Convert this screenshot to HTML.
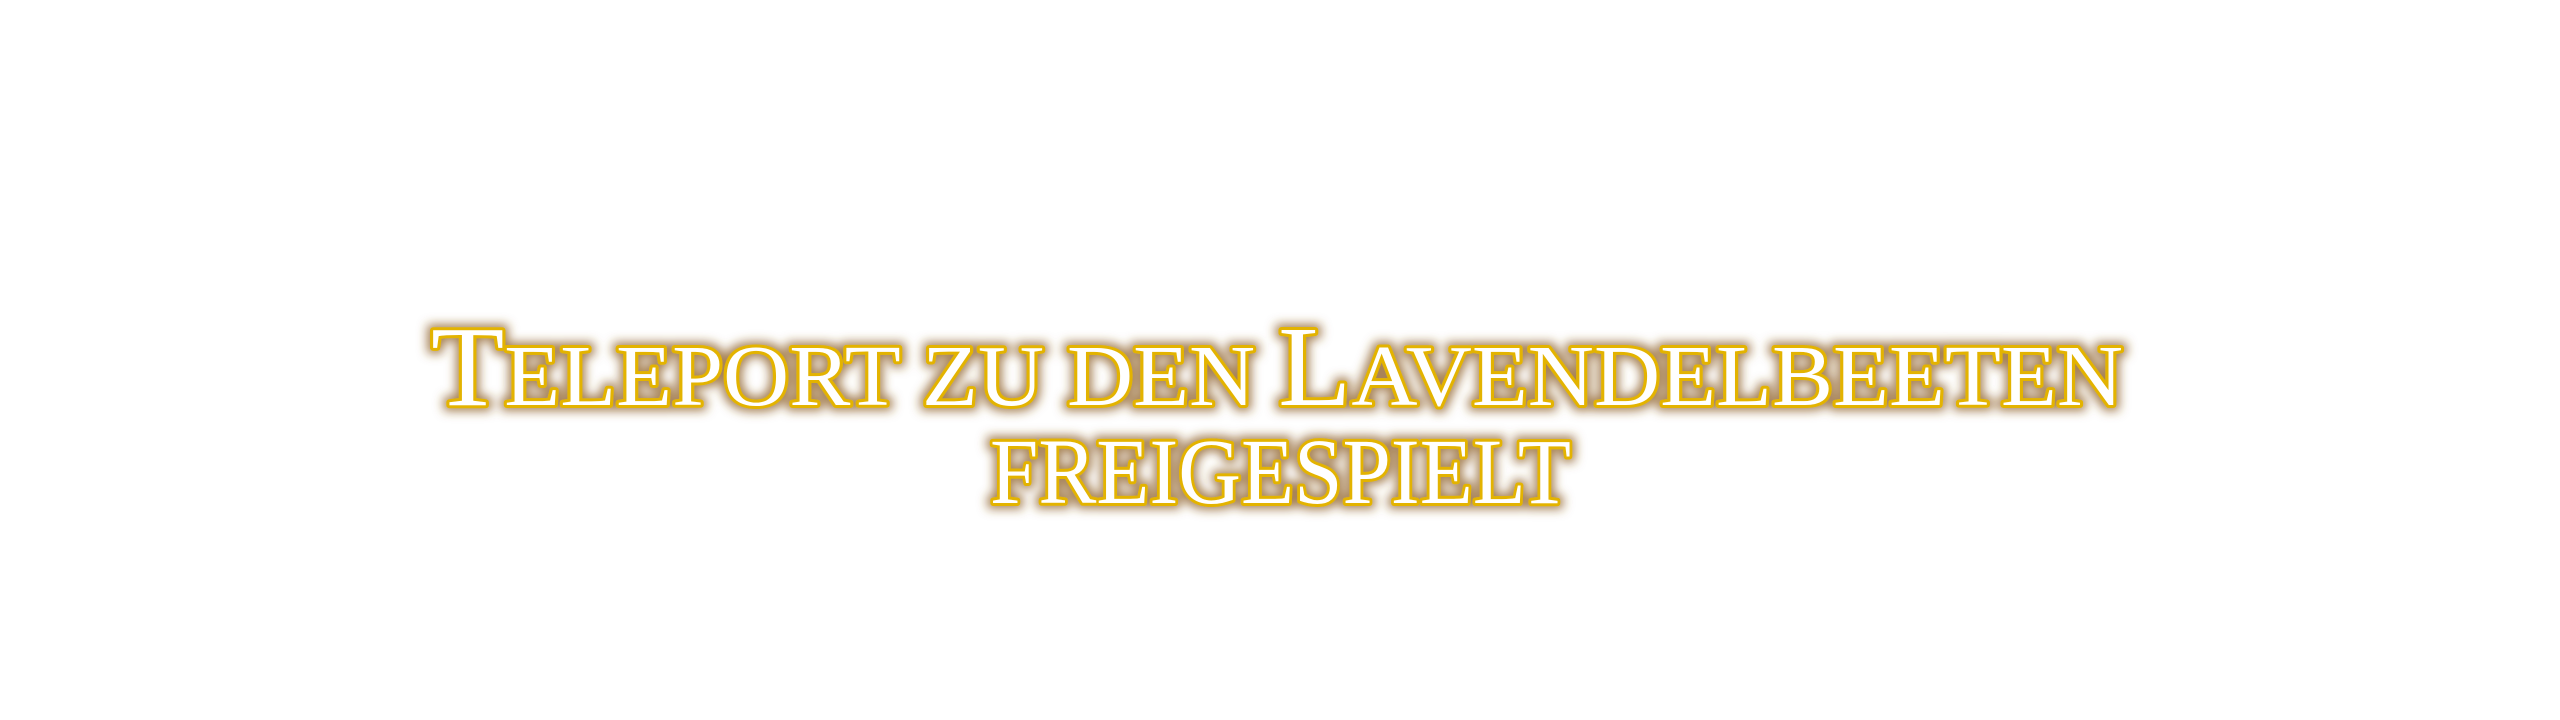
<!DOCTYPE html>
<html><head><meta charset="utf-8"><style>
html,body{margin:0;padding:0;background:#fff;width:2560px;height:720px;overflow:hidden}
svg{display:block}
text{font-family:"Liberation Serif",serif;fill:#fff;stroke:#e3b300;stroke-width:6px;paint-order:stroke;stroke-linejoin:round}
</style></head><body>
<svg width="2560" height="720" viewBox="0 0 2560 720">
<defs>
<filter id="g" x="-10%" y="-50%" width="120%" height="200%">
<feMorphology in="SourceAlpha" operator="dilate" radius="3" result="d"/>
<feGaussianBlur in="d" stdDeviation="5" result="b"/>
<feFlood flood-color="#8a5a20" flood-opacity="0.75"/>
<feComposite in2="b" operator="in" result="glow"/>
<feMerge><feMergeNode in="glow"/><feMergeNode in="SourceGraphic"/></feMerge>
</filter>
</defs>
<g filter="url(#g)">
<text x="431" y="405" textLength="1692" lengthAdjust="spacingAndGlyphs"><tspan font-size="114">T</tspan><tspan font-size="87">ELEPORT ZU DEN </tspan><tspan font-size="114">L</tspan><tspan font-size="87">AVENDELBEETEN</tspan></text>
<text x="990" y="503" font-size="93" textLength="581" lengthAdjust="spacingAndGlyphs">FREIGESPIELT</text>
</g>
</svg>
</body></html>
